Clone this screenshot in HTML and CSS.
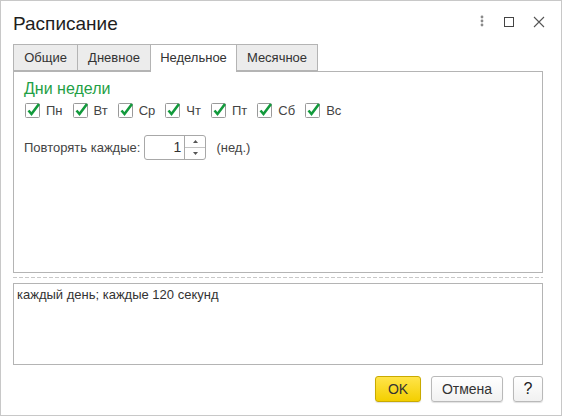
FILE: index.html
```html
<!DOCTYPE html>
<html lang="ru">
<head>
<meta charset="utf-8">
<link rel="stylesheet" href="styles.css">
</head>
<body>
<div class="window">
  <div class="header">
    <div class="title">Расписание</div>
    <div class="controls">
      <svg class="ctl" width="10" height="16" viewBox="0 0 10 16"><circle cx="5" cy="3" r="1.4" fill="#8a8a8a"/><circle cx="5" cy="7" r="1.4" fill="#8a8a8a"/><circle cx="5" cy="11" r="1.4" fill="#8a8a8a"/></svg>
      <svg class="ctl" width="16" height="16" viewBox="0 0 16 16"><rect x="3.5" y="3.5" width="9" height="9" fill="none" stroke="#444" stroke-width="1"/></svg>
      <svg class="ctl" width="16" height="16" viewBox="0 0 16 16"><path d="M3 3 L13 13 M13 3 L3 13" stroke="#555" stroke-width="1.1" fill="none"/></svg>
    </div>
  </div>
  <div class="body">
    <div class="tabs">
      <div class="tab tab-1">Общие</div>
      <div class="tab tab-2">Дневное</div>
      <div class="tab tab-3 active">Недельное</div>
      <div class="tab tab-4">Месячное</div>
    </div>
    <div class="panel">
      <div class="group-title">Дни недели</div>
      <div class="days">
        <div class="day"><svg class="cb" width="18" height="18" viewBox="0 0 18 18"><rect x="1.5" y="2.5" width="14" height="14" rx="1" fill="#fff" stroke="#9a9a9a"/><path d="M4.5 9.5 L7.5 13 L15 3" stroke="#129a3c" stroke-width="2.6" fill="none"/></svg><span>Пн</span></div>
        <div class="day"><svg class="cb" width="18" height="18" viewBox="0 0 18 18"><rect x="1.5" y="2.5" width="14" height="14" rx="1" fill="#fff" stroke="#9a9a9a"/><path d="M4.5 9.5 L7.5 13 L15 3" stroke="#129a3c" stroke-width="2.6" fill="none"/></svg><span>Вт</span></div>
        <div class="day"><svg class="cb" width="18" height="18" viewBox="0 0 18 18"><rect x="1.5" y="2.5" width="14" height="14" rx="1" fill="#fff" stroke="#9a9a9a"/><path d="M4.5 9.5 L7.5 13 L15 3" stroke="#129a3c" stroke-width="2.6" fill="none"/></svg><span>Ср</span></div>
        <div class="day"><svg class="cb" width="18" height="18" viewBox="0 0 18 18"><rect x="1.5" y="2.5" width="14" height="14" rx="1" fill="#fff" stroke="#9a9a9a"/><path d="M4.5 9.5 L7.5 13 L15 3" stroke="#129a3c" stroke-width="2.6" fill="none"/></svg><span>Чт</span></div>
        <div class="day"><svg class="cb" width="18" height="18" viewBox="0 0 18 18"><rect x="1.5" y="2.5" width="14" height="14" rx="1" fill="#fff" stroke="#9a9a9a"/><path d="M4.5 9.5 L7.5 13 L15 3" stroke="#129a3c" stroke-width="2.6" fill="none"/></svg><span>Пт</span></div>
        <div class="day"><svg class="cb" width="18" height="18" viewBox="0 0 18 18"><rect x="1.5" y="2.5" width="14" height="14" rx="1" fill="#fff" stroke="#9a9a9a"/><path d="M4.5 9.5 L7.5 13 L15 3" stroke="#129a3c" stroke-width="2.6" fill="none"/></svg><span>Сб</span></div>
        <div class="day"><svg class="cb" width="18" height="18" viewBox="0 0 18 18"><rect x="1.5" y="2.5" width="14" height="14" rx="1" fill="#fff" stroke="#9a9a9a"/><path d="M4.5 9.5 L7.5 13 L15 3" stroke="#129a3c" stroke-width="2.6" fill="none"/></svg><span>Вс</span></div>
      </div>
      <div class="repeat">
        <span class="label">Повторять каждые:</span>
        <div class="spin">
          <div class="spin-value">1</div>
          <div class="spin-btns">
            <div class="spin-up"><svg width="5" height="3" viewBox="0 0 5 3"><path d="M0 3 L2.5 0 L5 3 Z" fill="#555"/></svg></div>
            <div class="spin-down"><svg width="5" height="3" viewBox="0 0 5 3"><path d="M0 0 L2.5 3 L5 0 Z" fill="#555"/></svg></div>
          </div>
        </div>
        <span class="unit">(нед.)</span>
      </div>
    </div>
    <div class="separator"></div>
    <div class="summary">каждый день; каждые 120 секунд</div>
    <div class="footer">
      <button class="btn btn-ok">OK</button>
      <button class="btn btn-cancel">Отмена</button>
      <button class="btn btn-help">?</button>
    </div>
  </div>
</div>
</body>
</html>
```

FILE: styles.css
```css
* { box-sizing: border-box; }
html, body { margin: 0; padding: 0; background: #fff; }
body {
  font-family: "Liberation Sans", Arial, sans-serif;
  font-size: 13px;
  color: #333;
}
.window {
  width: 562px;
  height: 416px;
  border: 1px solid #c8c8c8;
  display: flex;
  flex-direction: column;
}
.header {
  height: 43px;
  display: flex;
  align-items: flex-start;
  justify-content: space-between;
  padding: 12px 14px 0 12px;
}
.title {
  font-size: 19px;
  line-height: 22px;
  color: #1e1e1e;
}
.controls {
  display: flex;
  align-items: center;
  gap: 14px;
  margin-top: 1px;
}
.ctl { display: block; }
.body {
  padding: 0 18px 0 12px;
  display: flex;
  flex-direction: column;
}
.tabs {
  display: flex;
  height: 27px;
  position: relative;
  z-index: 1;
}
.tab {
  height: 27px;
  line-height: 26px;
  text-align: center;
  border: 1px solid #b4b4b4;
  background: #ececec;
  color: #333;
  margin-right: -1px;
  white-space: nowrap;
}
.tab-1 { width: 65px; }
.tab-2 { width: 74px; }
.tab-3 { width: 87px; }
.tab-4 { width: 82px; }
.tab.active {
  background: #fff;
  height: 28px;
  border-bottom: none;
}
.panel {
  height: 202px;
  border: 1px solid #b4b4b4;
  padding: 8px 10px 0 10px;
}
.group-title {
  font-size: 16px;
  line-height: 18px;
  color: #1fa046;
}
.days {
  display: flex;
  gap: 9px;
  margin-top: 3px;
  align-items: center;
}
.day {
  display: flex;
  align-items: center;
  gap: 4px;
  color: #444;
}
.cb { display: block; }
.repeat {
  display: flex;
  align-items: center;
  margin-top: 16px;
  color: #444;
}
.label { margin-right: 4px; }
.spin {
  width: 62px;
  height: 25px;
  border: 1px solid #a8a8a8;
  border-radius: 3px;
  display: flex;
}
.spin-value {
  flex: 1;
  text-align: right;
  line-height: 23px;
  padding-right: 3px;
  color: #333;
  font-size: 14px;
}
.spin-btns {
  width: 21px;
  border-left: 1px solid #a8a8a8;
  display: flex;
  flex-direction: column;
}
.spin-up, .spin-down {
  flex: 1;
  display: flex;
  align-items: center;
  justify-content: center;
}
.spin-down { border-top: 1px solid #c4c4c4; }
.spin svg { display: block; }
.unit { margin-left: 10px; }
.separator {
  margin-top: 4px;
  height: 1px;
  background-image: linear-gradient(to right, #c8c8c8 0 4px, transparent 4px 6px);
  background-size: 6px 1px;
}
.summary {
  margin-top: 5px;
  height: 82px;
  border: 1px solid #b4b4b4;
  padding: 3px 3px;
  line-height: 16px;
  color: #333;
}
.footer {
  display: flex;
  justify-content: flex-end;
  gap: 10px;
  margin-top: 11px;
}
.btn {
  height: 26px;
  border: 1px solid #b9b9b9;
  border-radius: 3px;
  background: linear-gradient(#ffffff, #f1f1f1);
  box-shadow: 0 1px 1px rgba(0,0,0,0.12);
  font-family: "Liberation Sans", Arial, sans-serif;
  font-size: 14px;
  color: #333;
  padding: 0;
}
.btn-ok {
  width: 46px;
  background: linear-gradient(#ffe44a, #f3cf00);
  border-color: #c9aa00;
  color: #333;
}
.btn-cancel { width: 72px; }
.btn-help { width: 30px; font-size: 16px; color: #222; }
```
